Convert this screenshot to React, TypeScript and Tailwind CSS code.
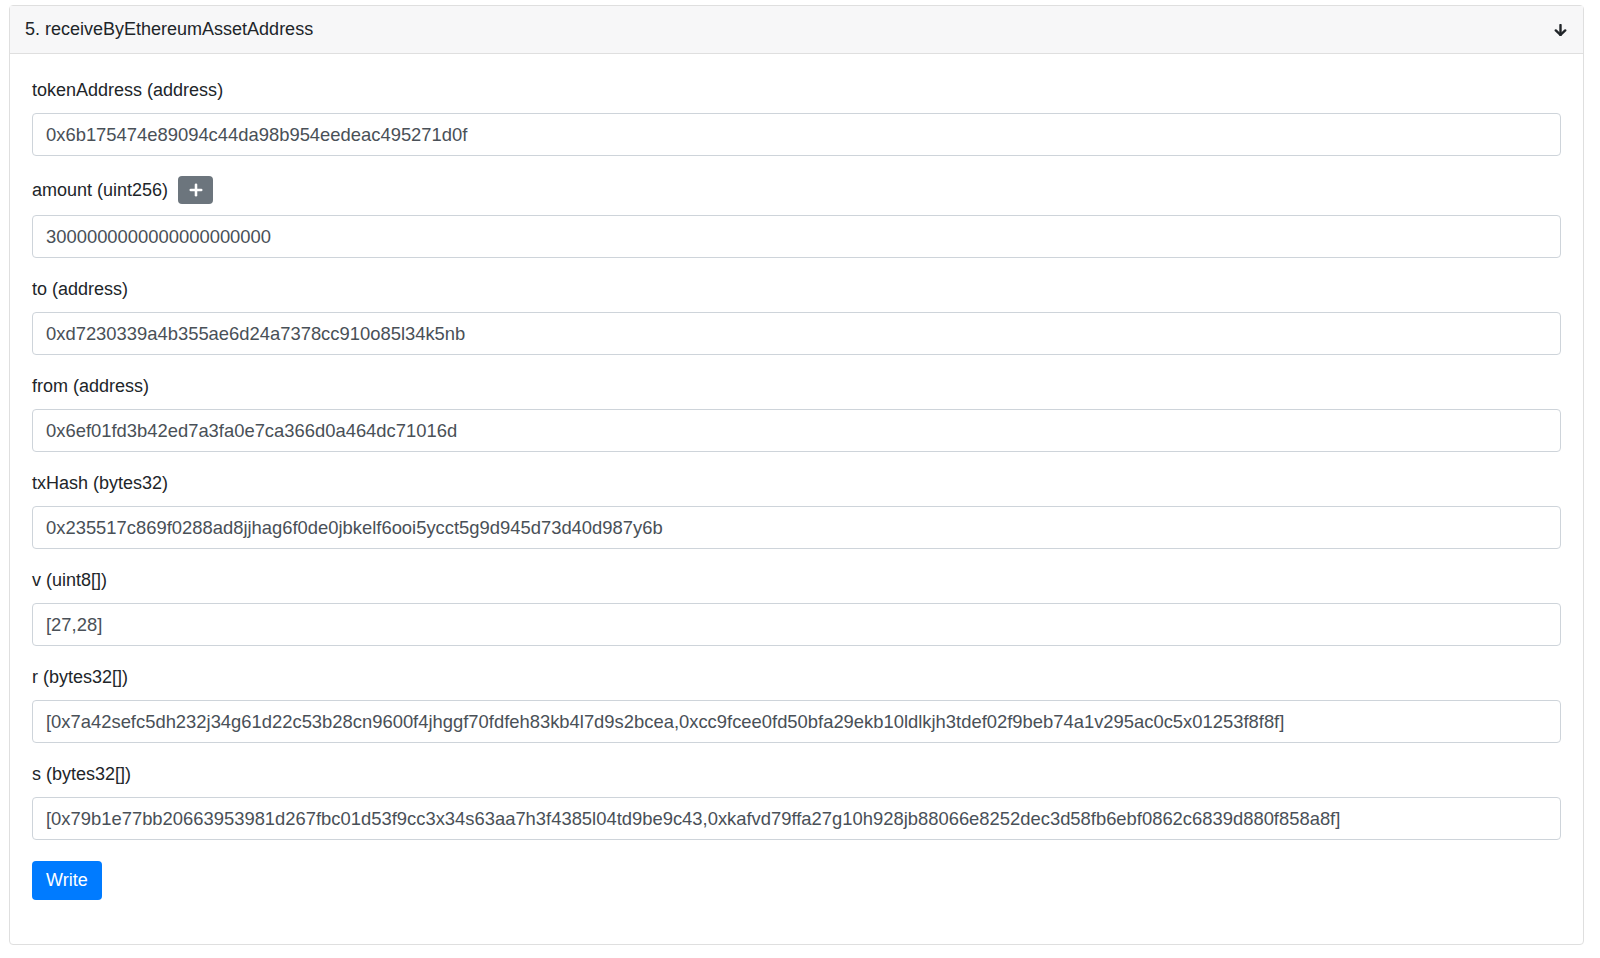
import { Plus } from 'lucide-react';

// ---------------------------------------------------------------------------
// Data
// ---------------------------------------------------------------------------

interface Field {
  name: string;
  type: string;
  value: string;
  addable?: boolean;
}

const fields: Field[] = [
  { name: 'tokenAddress', type: 'address', value: '0x6b175474e89094c44da98b954eedeac495271d0f' },
  { name: 'amount', type: 'uint256', value: '3000000000000000000000', addable: true },
  { name: 'to', type: 'address', value: '0xd7230339a4b355ae6d24a7378cc910o85l34k5nb' },
  { name: 'from', type: 'address', value: '0x6ef01fd3b42ed7a3fa0e7ca366d0a464dc71016d' },
  {
    name: 'txHash',
    type: 'bytes32',
    value: '0x235517c869f0288ad8jjhag6f0de0jbkelf6ooi5ycct5g9d945d73d40d987y6b',
  },
  { name: 'v', type: 'uint8[]', value: '[27,28]' },
  {
    name: 'r',
    type: 'bytes32[]',
    value:
      '[0x7a42sefc5dh232j34g61d22c53b28cn9600f4jhggf70fdfeh83kb4l7d9s2bcea,0xcc9fcee0fd50bfa29ekb10ldlkjh3tdef02f9beb74a1v295ac0c5x01253f8f8f]',
  },
  {
    name: 's',
    type: 'bytes32[]',
    value:
      '[0x79b1e77bb20663953981d267fbc01d53f9cc3x34s63aa7h3f4385l04td9be9c43,0xkafvd79ffa27g10h928jb88066e8252dec3d58fb6ebf0862c6839d880f858a8f]',
  },
];

// ---------------------------------------------------------------------------
// Component
// ---------------------------------------------------------------------------

function FieldGroup({ field }: { field: Field }) {
  return (
    <div className="mb-[18px]">
      <div className="mb-[9px] flex items-center gap-[10px] leading-[27px] text-[#212529]">
        <label>
          {field.name} ({field.type})
        </label>
        {field.addable && (
          <button className="my-[2px] flex h-[28px] w-[35px] items-center justify-center rounded-[4px] bg-[#6c757d] text-white">
            <Plus className="h-[18px] w-[18px]" strokeWidth={3.4} />
          </button>
        )}
      </div>
      <input
        readOnly
        value={field.value}
        className="block h-[43px] w-full rounded-[4px] border border-[#ced4da] bg-white px-[13px] text-[18.4px] text-[#495057] outline-none"
      />
    </div>
  );
}

export default function App() {
  return (
    <div
      className="min-h-[958px] bg-white pt-[5px] pl-[9px] text-[18px]"
      style={{ fontFamily: '"Liberation Sans", Arial, Helvetica, sans-serif' }}
    >
      <div className="w-[1575px] rounded-[4px] border border-[#dfdfdf]">
        {/* Header */}
        <div className="flex h-[48px] items-center justify-between border-b border-[#dfdfdf] bg-[#f7f7f8] pr-[16px] pl-[15px] text-[#212529]">
          <span>5. receiveByEthereumAssetAddress</span>
          <svg
            viewBox="0 0 13 12"
            className="h-[12px] w-[13px]"
            fill="none"
            stroke="#212529"
            strokeWidth={2.4}
            strokeLinecap="round"
            strokeLinejoin="round"
          >
            <path d="M6.5 1v10" />
            <path d="M1.8 6.4 6.5 10.8 11.2 6.4" />
          </svg>
        </div>

        {/* Body */}
        <div className="px-[22px] pt-[23px] pb-[44px]">
          {fields.map((f) => (
            <FieldGroup key={f.name} field={f} />
          ))}
          <button className="mt-[3px] h-[39px] rounded-[4px] bg-[#007bff] px-[14px] text-[18px] text-white">
            Write
          </button>
        </div>
      </div>
    </div>
  );
}
